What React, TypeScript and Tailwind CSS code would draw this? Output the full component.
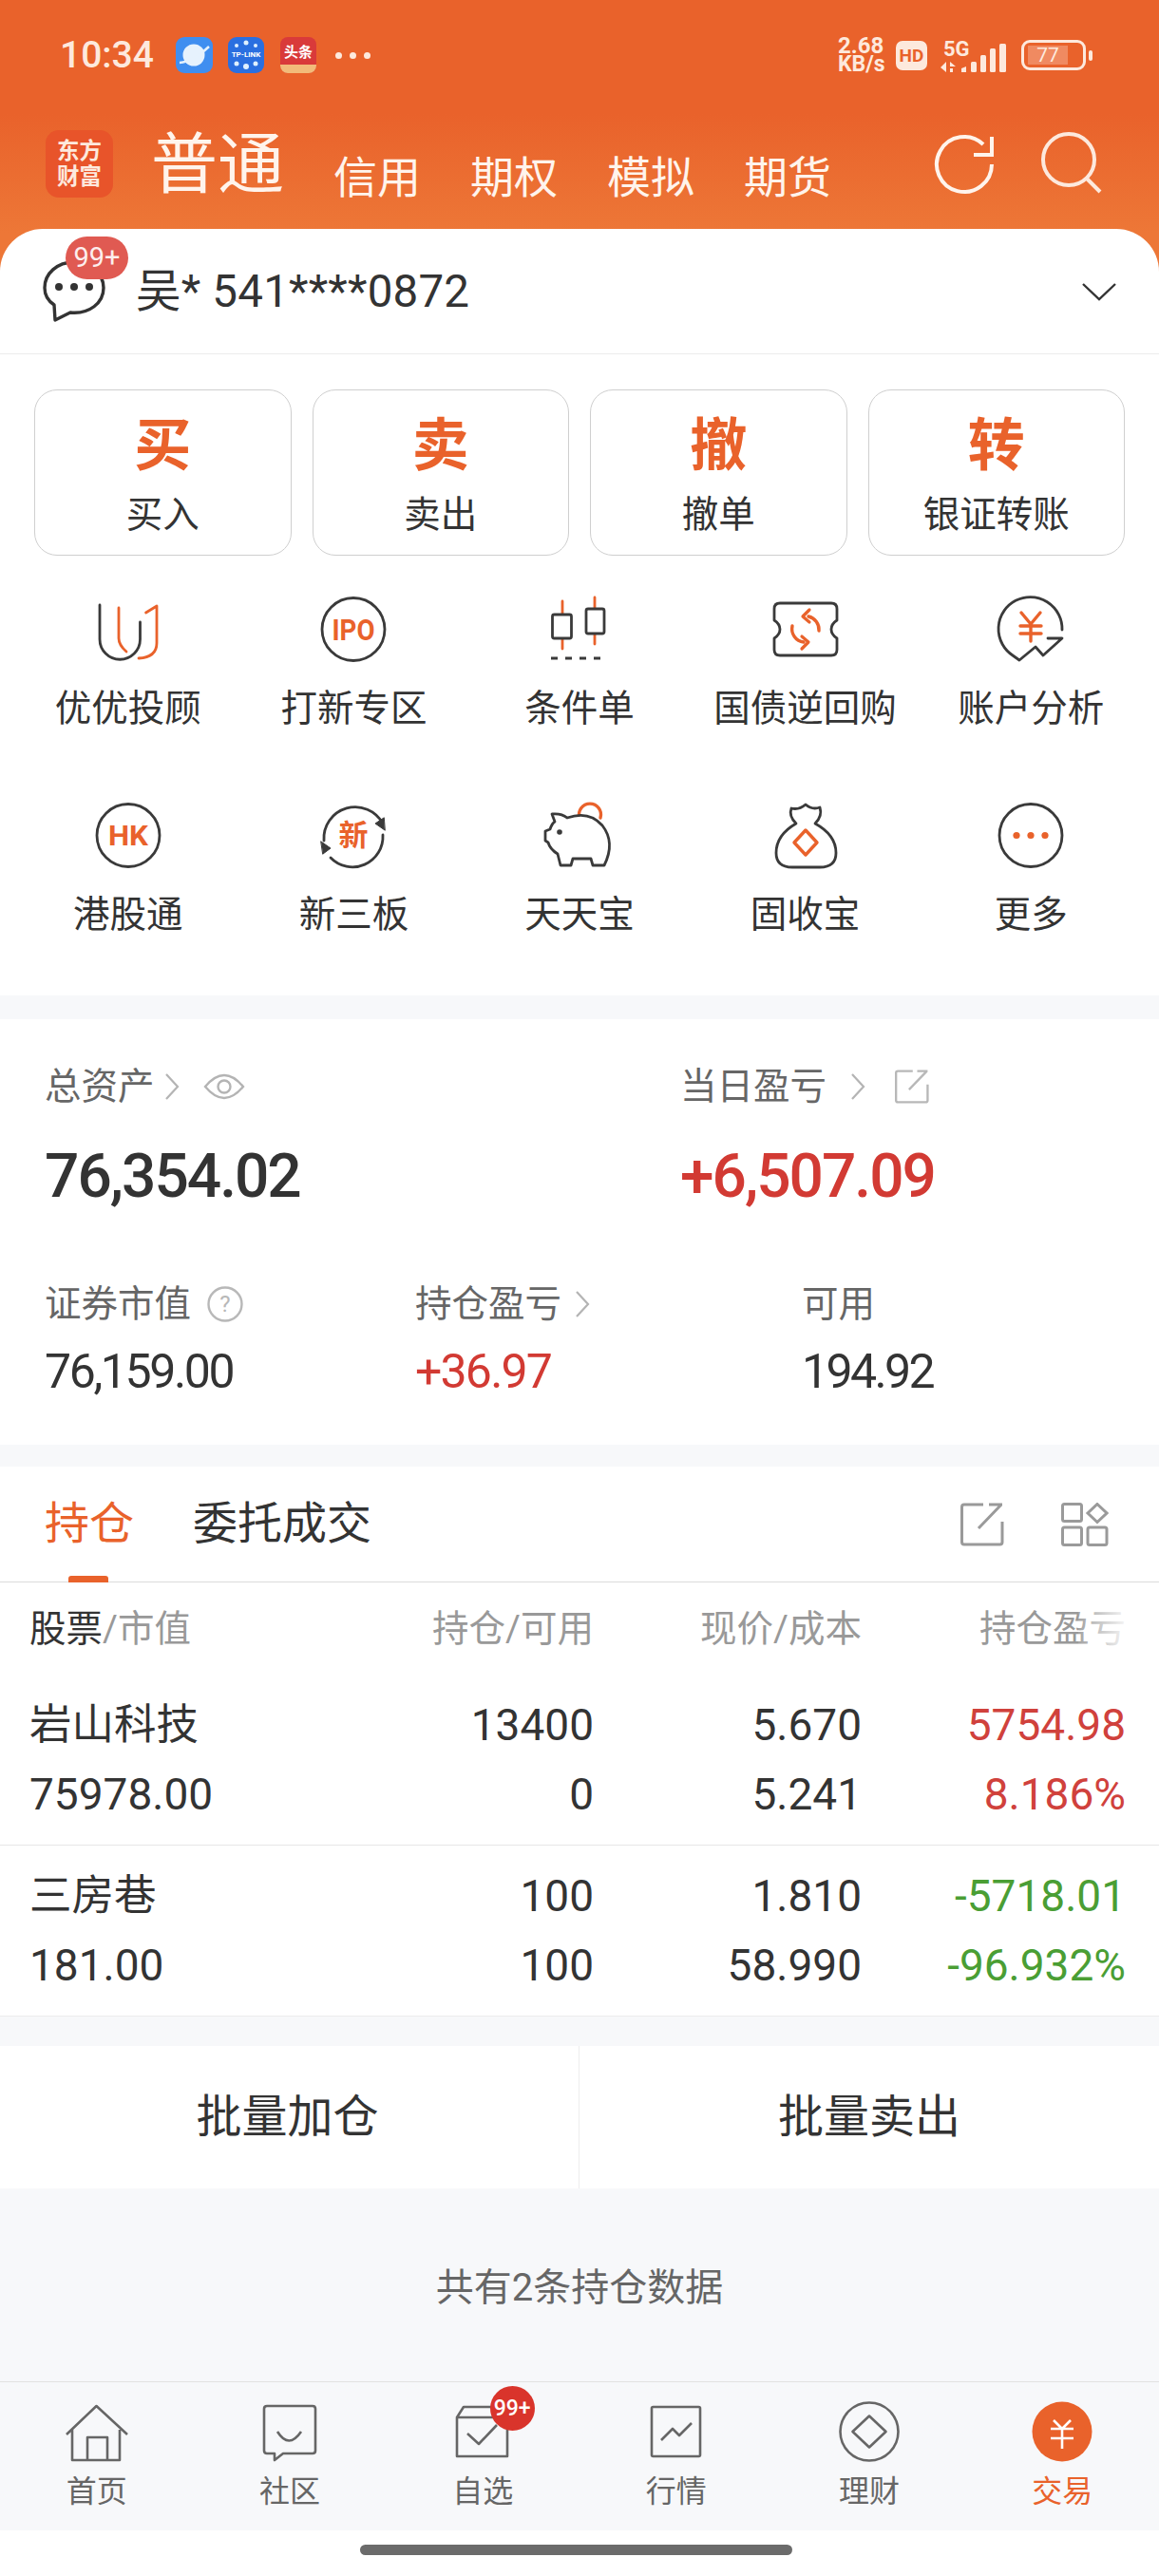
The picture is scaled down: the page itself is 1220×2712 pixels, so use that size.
import React from "react";

const ORANGE = "#e9622b";
const DARK = "#3a3a3a";

// Shared 80x74 frame for the shortcut icons
function Glyph({ children }: { children: React.ReactNode }) {
  return (
    <svg width="80" height="74" viewBox="0 0 80 74" fill="none" strokeLinecap="round" strokeLinejoin="round" strokeWidth="2.8">
      {children}
    </svg>
  );
}

const Ring = () => <circle cx="40" cy="36.5" r="33" stroke={DARK} />;

const IconText = ({ t, size, y = 46, fit }: { t: string; size: number; y?: number; fit?: number }) => (
  <text
    x="40"
    y={y}
    textAnchor="middle"
    fontSize={size}
    fontWeight="700"
    fill={ORANGE}
    stroke="none"
    fontFamily="Roboto, 'Noto Sans CJK SC', sans-serif"
    textLength={fit}
    lengthAdjust={fit ? "spacingAndGlyphs" : undefined}
  >
    {t}
  </text>
);

const shortcuts: { label: string; icon: React.ReactNode }[] = [
  {
    label: "优优投顾",
    icon: (
      <Glyph>
        <path d="M10 11V47A21.2 21.2 0 0 0 52.5 47V29" stroke={DARK} />
        <path d="M30 14V46Q30 53 38 60" stroke={ORANGE} />
        <path d="M58.6 19L70 12V51Q70 66 51 67" stroke={ORANGE} />
      </Glyph>
    ),
  },
  {
    label: "打新专区",
    icon: (
      <Glyph>
        <Ring />
        <IconText t="IPO" size={32} y={48} fit={45} />
      </Glyph>
    ),
  },
  {
    label: "条件单",
    icon: (
      <Glyph>
        <path d="M22 7V57M56 3V52" stroke={ORANGE} />
        <rect x="11.5" y="21" width="20" height="25" rx="2" fill="#fff" stroke={DARK} />
        <rect x="47" y="15" width="19" height="26" rx="2" fill="#fff" stroke={DARK} />
        <path d="M10 67H70" stroke={DARK} strokeDasharray="7 8" strokeLinecap="butt" strokeWidth="3.2" />
      </Glyph>
    ),
  },
  {
    label: "国债逆回购",
    icon: (
      <Glyph>
        <path d="M13 9H67Q73 9 73 15V27Q67 31 67 36.5Q67 42 73 46V58Q73 64 67 64H13Q7 64 7 58V46Q13 42 13 36.5Q13 31 7 27V15Q7 9 13 9Z" stroke={DARK} />
        <path d="M54 38A14 14 0 0 0 43 23M26 33A14 14 0 0 0 38 50" stroke={ORANGE} strokeWidth="3.4" />
        <path d="M44 16L37 23L44 29M36 44L43 50L36 57" stroke={ORANGE} strokeWidth="3.2" />
      </Glyph>
    ),
  },
  {
    label: "账户分析",
    icon: (
      <Glyph>
        <path d="M73 37A33.5 33.5 0 1 0 21 64L28 69L45 55L53 64L73 46H58" stroke={DARK} />
        <path d="M30 19L40 31L50 19M29 33H51M29 41H51M40 31V49" stroke={ORANGE} strokeWidth="3.4" />
      </Glyph>
    ),
  },
  {
    label: "港股通",
    icon: (
      <Glyph>
        <Ring />
        <IconText t="HK" size={30} y={47} fit={42} />
      </Glyph>
    ),
  },
  {
    label: "新三板",
    icon: (
      <Glyph>
        <path d="M9 42A33 33 0 0 1 71 24M71 36A32 32 0 0 1 16 60" stroke={DARK} />
        <path d="M73 31L63 24L72 18Z" fill={DARK} stroke={DARK} strokeWidth="1" />
        <path d="M6 43L16 50L8 56Z" fill={DARK} stroke={DARK} strokeWidth="1" />
        <IconText t="新" size={31} y={47} />
      </Glyph>
    ),
  },
  {
    label: "天天宝",
    icon: (
      <Glyph>
        <path d="M40 18A11.5 11.5 0 1 1 62 18" stroke={ORANGE} strokeWidth="3.4" />
        <path d="M11 14Q21 13 27 18Q50 10 64 26Q78 44 66 68H54L52 61H33L31 68H20L17 56Q9 51 7 44L4 42V32L9 30Q11 24 14 22Z" fill="#fff" stroke={DARK} />
        <circle cx="19" cy="33" r="2.8" fill={DARK} stroke="none" />
      </Glyph>
    ),
  },
  {
    label: "固收宝",
    icon: (
      <Glyph>
        <path d="M25 8Q33 10 40 4Q47 10 55 7Q58 16 50 24Q72 36 72 55Q72 70 55 70H26Q9 70 9 55Q9 36 30 24Q22 16 25 8Z" stroke={DARK} />
        <path d="M40 31L52 44L40 57L28 44Z" stroke={ORANGE} strokeWidth="3.4" />
      </Glyph>
    ),
  },
  {
    label: "更多",
    icon: (
      <Glyph>
        <Ring />
        <g fill={ORANGE} stroke="none">
          <circle cx="25" cy="36.5" r="3.6" />
          <circle cx="40" cy="36.5" r="3.6" />
          <circle cx="55" cy="36.5" r="3.6" />
        </g>
      </Glyph>
    ),
  },
];

const trades = [
  ["买", "买入"],
  ["卖", "卖出"],
  ["撤", "撤单"],
  ["转", "银证转账"],
];

// Thin right-pointing chevron beside the asset labels
const Chevron = ({ className = "" }: { className?: string }) => (
  <svg width="16" height="34" viewBox="0 0 16 34" fill="none" stroke="#b4b4b4" strokeWidth="2.2" className={className}>
    <path d="M2 4L14 17L2 30" />
  </svg>
);

const ShareIcon = ({ size, color }: { size: number; color: string }) => (
  <svg width={size} height={size} viewBox="0 0 46 46" fill="none" stroke={color} strokeWidth="3">
    <path d="M24 2H4Q1.5 2 1.5 4.5V41.5Q1.5 44 4 44H41.5Q44 44 44 41.5V20" />
    <path d="M19 27L43 2M30 2H44" />
  </svg>
);

type Cell = { text: string; color?: string };
const holdings: Cell[][][] = [
  [
    [{ text: "岩山科技" }, { text: "13400" }, { text: "5.670" }, { text: "5754.98", color: "text-[#d0413c]" }],
    [{ text: "75978.00" }, { text: "0" }, { text: "5.241" }, { text: "8.186%", color: "text-[#d0413c]" }],
  ],
  [
    [{ text: "三房巷" }, { text: "100" }, { text: "1.810" }, { text: "-5718.01", color: "text-[#4a9e34]" }],
    [{ text: "181.00" }, { text: "100" }, { text: "58.990" }, { text: "-96.932%", color: "text-[#4a9e34]" }],
  ],
];

const tabs: { label: string; active?: boolean; badge?: boolean; icon: React.ReactNode }[] = [
  {
    label: "首页",
    icon: <path d="M8 36L39.5 6L72 36M14 31V63H64V31M30 63V39H51V63" />,
  },
  {
    label: "社区",
    icon: (
      <>
        <path d="M16 6H64Q67 6 67 9V53Q67 56 64 56H33L24 63V56H16Q13 56 13 53V9Q13 6 16 6Z" />
        <path d="M27 33Q39 52 52 33" />
      </>
    ),
  },
  {
    label: "自选",
    badge: true,
    icon: (
      <>
        <path d="M13 18V59H66V18M13 18L20 7H60L66 18Z" />
        <path d="M24 35L36 46L55 26" />
      </>
    ),
  },
  {
    label: "行情",
    icon: (
      <>
        <rect x="14" y="7" width="51" height="52" rx="1.5" />
        <path d="M24 42L36 30L43 37L56 24" />
      </>
    ),
  },
  {
    label: "理财",
    icon: (
      <>
        <circle cx="40" cy="33" r="30.5" />
        <path d="M40 16.5L57.5 33L40 49.5L22.5 33Z" />
      </>
    ),
  },
  {
    label: "交易",
    active: true,
    icon: (
      <>
        <circle cx="40" cy="33" r="31.5" fill={ORANGE} stroke="none" />
        <path d="M31 21L40 30L49 21M28 30H52M28 40H52M40 30V51" stroke="#fff" strokeWidth="2.6" />
      </>
    ),
  },
];

function StatusBar() {
  return (
    <div className="flex h-[38px] items-center pl-[63px] pr-[70px] text-[#fde9dd]">
      <span className="w-[122px] text-[39px] font-medium leading-none">10:34</span>
      {/* notification app badges */}
      <div className="relative h-[38px] w-[39px] overflow-hidden rounded-[9px] bg-[#3f8ef0]">
        <svg viewBox="0 0 39 38" className="h-full w-full">
          <circle cx="19" cy="19" r="11.5" fill="#e6f2fd" />
          <path d="M4 27Q18 26 35 10" stroke="#e6f2fd" strokeWidth="2.5" fill="none" />
        </svg>
      </div>
      <div className="relative ml-[16px] flex h-[38px] w-[38px] items-center justify-center overflow-hidden rounded-[9px] bg-[#2a6fe0]">
        <svg viewBox="0 0 38 38" className="absolute inset-0 h-full w-full" fill="#dff0ff">
          <circle cx="19" cy="6" r="2.5" />
          <circle cx="9" cy="9" r="2" />
          <circle cx="29" cy="9" r="2" />
          <circle cx="19" cy="31" r="3" />
          <circle cx="9" cy="28" r="2.5" />
          <circle cx="29" cy="28" r="2.5" />
        </svg>
        <span className="relative whitespace-nowrap text-[8px] font-bold leading-none text-white">TP-LINK</span>
      </div>
      <div className="ml-[17px] flex h-[38px] w-[38px] flex-col items-center overflow-hidden rounded-[8px] bg-[#d93a3a] text-white">
        <span className="mt-[8px] text-[15px] font-bold leading-[16px]">头条</span>
        <span className="mt-[5px] h-[9px] w-full bg-[#f2bb7a]" />
      </div>
      <div className="ml-[20px] flex gap-[8px]">
        <span className="h-[7px] w-[7px] rounded-full bg-[#fde9dd]" />
        <span className="h-[7px] w-[7px] rounded-full bg-[#fde9dd]" />
        <span className="h-[7px] w-[7px] rounded-full bg-[#fde9dd]" />
      </div>
      <div className="ml-auto flex w-[50px] flex-col items-start font-bold">
        <span className="text-[24px] leading-[19px]">2.68</span>
        <span className="text-[23px] leading-[19px]">KB/s</span>
      </div>
      <span className="ml-[11px] flex h-[31px] w-[33px] items-center justify-center rounded-[7px] bg-[#fde9dd] text-[19px] font-bold leading-none text-[#e9622b]">
        HD
      </span>
      <svg width="70" height="40" viewBox="0 -4 70 40" className="ml-[14px]" fill="#fde9dd">
        <text x="3" y="17" fontSize="22" fontWeight="700" fontFamily="Roboto, sans-serif">5G</text>
        <path d="M6 23V34L0 29ZM10 23L16 28H10ZM10 30H13V34H10Z" />
        <path d="M22 34V30L27 28V34Z" />
        <rect x="32" y="23" width="6" height="11" rx="1.5" />
        <rect x="42" y="16" width="6" height="18" rx="1.5" />
        <rect x="52" y="9" width="6" height="25" rx="1.5" />
        <rect x="62" y="4" width="7" height="30" rx="1.5" />
      </svg>
      <div className="relative ml-[15px] flex h-[32px] w-[68px] items-center rounded-[9px] border-[3px] border-[#fde9dd] pl-[4px]">
        <div className="flex h-[20px] w-[42px] items-center justify-center bg-[#f08a61] text-[21px] leading-none">77</div>
      </div>
      <span className="ml-[3px] h-[11px] w-[4px] rounded-full bg-[#fde9dd]" />
    </div>
  );
}

function TopNav() {
  return (
    <div className="mt-[60px] flex h-[71px] items-end pl-[48px] pr-[60px] text-[#fff4ec]">
      <div className="grid h-[71px] w-[71px] place-content-center rounded-[14px] bg-[#e8542a] text-center text-[23.5px] font-bold leading-[27px] text-[#fde9dd]">
        <span>东方</span>
        <span>财富</span>
      </div>
      <span className="mb-[-2px] ml-[40px] text-[70px] leading-[71px]">普通</span>
      <div className="mb-[-4px] ml-[52px] flex gap-[52px] text-[46px] leading-[50px]">
        <span>信用</span>
        <span>期权</span>
        <span>模拟</span>
        <span>期货</span>
      </div>
      <svg width="64" height="64" viewBox="0 0 64 64" fill="none" stroke="#fff4ec" strokeWidth="4" className="mb-[3px] ml-auto">
        <path d="M61 32A29 29 0 1 1 52 11" />
        <path d="M61 3V22H42" />
      </svg>
      <svg width="64" height="66" viewBox="0 0 64 66" fill="none" stroke="#fde9dd" strokeWidth="4" className="mb-[3px] ml-[49px]">
        <circle cx="29" cy="29" r="27" />
        <path d="M48 49L62 63" />
      </svg>
    </div>
  );
}

export default function App() {
  return (
    <div className="flex h-[2712px] w-[1220px] flex-col overflow-hidden bg-[#f7f8fa] text-[#333] [font-family:Roboto,'Noto_Sans_CJK_SC',sans-serif]">
      {/* orange header running behind the rounded account card */}
      <div className="bg-[linear-gradient(180deg,#e9622b_0,#e9622b_120px,#ed7737_245px)] pt-[39px]">
        <StatusBar />
        <TopNav />
        <div className="mt-[33px] flex h-[132px] items-center rounded-t-[45px] border-b border-[#ececec] bg-white pl-[45px] pr-[45px]">
          <div className="relative h-[66px] w-[66px]">
            <svg width="66" height="66" viewBox="0 0 66 66" fill="none" stroke="#333" strokeWidth="3.4" strokeLinejoin="round">
              <path d="M33 2C15 2 2 14 2 29C2 37 6 43 12 47L13 63L29 55C49 57 64 45 64 29C64 14 50 2 33 2Z" />
              <g fill="#333" stroke="none">
                <circle cx="17" cy="28" r="4" />
                <circle cx="33" cy="28" r="4" />
                <circle cx="49" cy="28" r="4" />
              </g>
            </svg>
            <span className="absolute left-[24px] top-[-25px] flex h-[45px] w-[66px] items-center justify-center rounded-full bg-[#e05a52] text-[29px] leading-none text-[#fdeeee]">
              99+
            </span>
          </div>
          <span className="ml-[32px] text-[47.5px] leading-[50px] tracking-[0.2px]">吴* 541****0872</span>
          <svg width="36" height="20" viewBox="0 0 36 20" fill="none" stroke="#333" strokeWidth="2.4" className="ml-auto">
            <path d="M1 2L18 18L35 2" />
          </svg>
        </div>
      </div>

      {/* trading shortcuts */}
      <div className="bg-white pb-[66px] pt-[37px]">
        <div className="grid grid-cols-4 gap-[22px] px-[36px]">
          {trades.map(([big, small]) => (
            <div key={big} className="flex h-[175px] flex-col items-center rounded-[24px] border border-[#cfcfcf]">
              <span className="mt-[24px] text-[60px] font-bold leading-[70px] text-[#e9622b]">{big}</span>
              <span className="mt-[15px] text-[38.5px] leading-[44px]">{small}</span>
            </div>
          ))}
        </div>
        <div className="mt-[41px] grid grid-cols-5 gap-y-[78px] px-[16px]">
          {shortcuts.map((s) => (
            <div key={s.label} className="flex flex-col items-center">
              {s.icon}
              <span className="mt-[27px] text-[38.5px] leading-[38px]">{s.label}</span>
            </div>
          ))}
        </div>
      </div>

      {/* account summary */}
      <div className="mt-[25px] h-[448px] bg-white pl-[47px]">
        <div className="flex pt-[52px] text-[38.5px] leading-[38px] text-[#666]">
          <div className="flex w-[669px] items-center">
            <span>总资产</span>
            <Chevron className="ml-[10px]" />
            <svg width="44" height="30" viewBox="0 0 44 30" fill="none" stroke="#b4b4b4" strokeWidth="2.4" className="ml-[25px]">
              <path d="M2 15Q22 -9 42 15Q22 39 2 15Z" />
              <circle cx="22" cy="15" r="6.5" />
            </svg>
          </div>
          <div className="flex items-center">
            <span>当日盈亏</span>
            <Chevron className="ml-[25px]" />
            <span className="ml-[31px] flex">
              <ShareIcon size={36} color="#b8b8b8" />
            </span>
          </div>
        </div>
        <div className="mt-[38px] flex text-[64px] font-medium leading-[76px]">
          <span className="w-[669px] tracking-[-2px] text-[#333]">76,354.02</span>
          <span className="tracking-[-2px] text-[#d23a33]">+6,507.09</span>
        </div>
        <div className="mt-[77px] flex text-[38.5px] leading-[38px] text-[#666]">
          <div className="flex w-[390px] items-center">
            <span>证券市值</span>
            <svg width="38" height="38" viewBox="0 0 38 38" fill="none" stroke="#b8b8b8" strokeWidth="2.4" className="ml-[17px]">
              <circle cx="19" cy="19" r="17.5" />
              <text x="19" y="27" textAnchor="middle" fontSize="24" fill="#b8b8b8" stroke="none">?</text>
            </svg>
          </div>
          <div className="flex w-[407px] items-center">
            <span>持仓盈亏</span>
            <Chevron className="ml-[14px]" />
          </div>
          <span>可用</span>
        </div>
        <div className="mt-[21px] flex text-[50px] leading-[62px]">
          <span className="w-[390px] tracking-[-2.4px]">76,159.00</span>
          <span className="w-[407px] tracking-[-1.8px] text-[#d23a33]">+36.97</span>
          <span className="tracking-[-2.6px]">194.92</span>
        </div>
      </div>

      {/* holdings */}
      <div className="mt-[23px] bg-white">
        <div className="relative flex h-[122px] items-center border-b border-[#dcdcdc] pl-[47px] pr-[53px] text-[47px]">
          <span className="text-[#e9622b]">持仓</span>
          <span className="ml-[62px]">委托成交</span>
          <span className="absolute bottom-[-1px] left-[72px] h-[7px] w-[42px] rounded-t-[3px] bg-[#e9622b]" />
          <span className="ml-auto flex">
            <ShareIcon size={46} color="#9a9a9a" />
          </span>
          <svg width="50" height="46" viewBox="0 0 50 46" fill="none" stroke="#9a9a9a" strokeWidth="3" className="ml-[60px]">
            <rect x="1.5" y="1.5" width="20" height="18" rx="2" />
            <rect x="1.5" y="26" width="20" height="18.5" rx="2" />
            <rect x="28" y="26" width="20" height="18.5" rx="2" />
            <path d="M38 1.5L48 11L38 20.5L28 11Z" />
          </svg>
        </div>
        <div className="grid h-[97px] grid-cols-[304px_290px_282px_278px] items-center pl-[31px] text-[38.5px] text-[#999]">
          <span>
            <span className="text-[#333]">股票</span>/市值
          </span>
          <span className="text-right">持仓/可用</span>
          <span className="text-right">现价/成本</span>
          <span className="relative text-right">
            持仓盈亏
            <span className="absolute bottom-0 right-0 top-0 w-[50px] bg-[linear-gradient(90deg,rgba(255,255,255,0.1),rgba(255,255,255,0.9))]" />
          </span>
        </div>
        {holdings.map((row, i) => (
          <div key={i} className={`h-[180px] py-[17px] pl-[31px] ${i === 0 ? "border-b border-[#e6e6e6]" : "border-b border-[#ececec]"}`}>
            {row.map((line, j) => (
              <div key={j} className="grid h-[73px] grid-cols-[304px_290px_282px_278px] items-center text-[46px] leading-[73px]">
                {line.map((c, k) => (
                  <span key={k} className={`${k === 0 ? "" : "text-right"} ${k === 0 && j === 0 ? "text-[44.5px]" : ""} ${c.color ?? ""}`}>
                    {c.text}
                  </span>
                ))}
              </div>
            ))}
          </div>
        ))}
      </div>

      {/* bulk actions */}
      <div className="mt-[31px] flex h-[150px] bg-white text-[48px]">
        <span className="flex w-[610px] items-center justify-center border-r border-[#eeeeee] pr-[4px]">批量加仓</span>
        <span className="flex flex-1 items-center justify-center">批量卖出</span>
      </div>

      <div className="flex h-[203px] items-center justify-center pt-[6px] text-[40px] text-[#666]">共有2条持仓数据</div>

      {/* bottom tab bar */}
      <div className="grid h-[157px] grid-cols-6 border-t border-[#e2e2e2] pt-[19px]">
        {tabs.map((t) => (
          <div key={t.label} className="relative flex flex-col items-center">
            <svg width="80" height="66" viewBox="0 0 80 66" fill="none" stroke="#666" strokeWidth="2.6" strokeLinejoin="round">
              {t.icon}
            </svg>
            {t.badge && (
              <span className="absolute left-[109px] top-[-15px] flex h-[47px] w-[47px] items-center justify-center rounded-full bg-[#d9342b] text-[23px] font-medium leading-none text-white">
                99+
              </span>
            )}
            <span className={`mt-[12px] text-[32px] leading-[36px] ${t.active ? "text-[#e9622b]" : "text-[#666]"}`}>{t.label}</span>
          </div>
        ))}
      </div>

      {/* system gesture bar */}
      <div className="flex flex-1 justify-center bg-white pr-[7px] pt-[15px]">
        <span className="h-[11px] w-[455px] rounded-full bg-[#6b6b6b]" />
      </div>
    </div>
  );
}
